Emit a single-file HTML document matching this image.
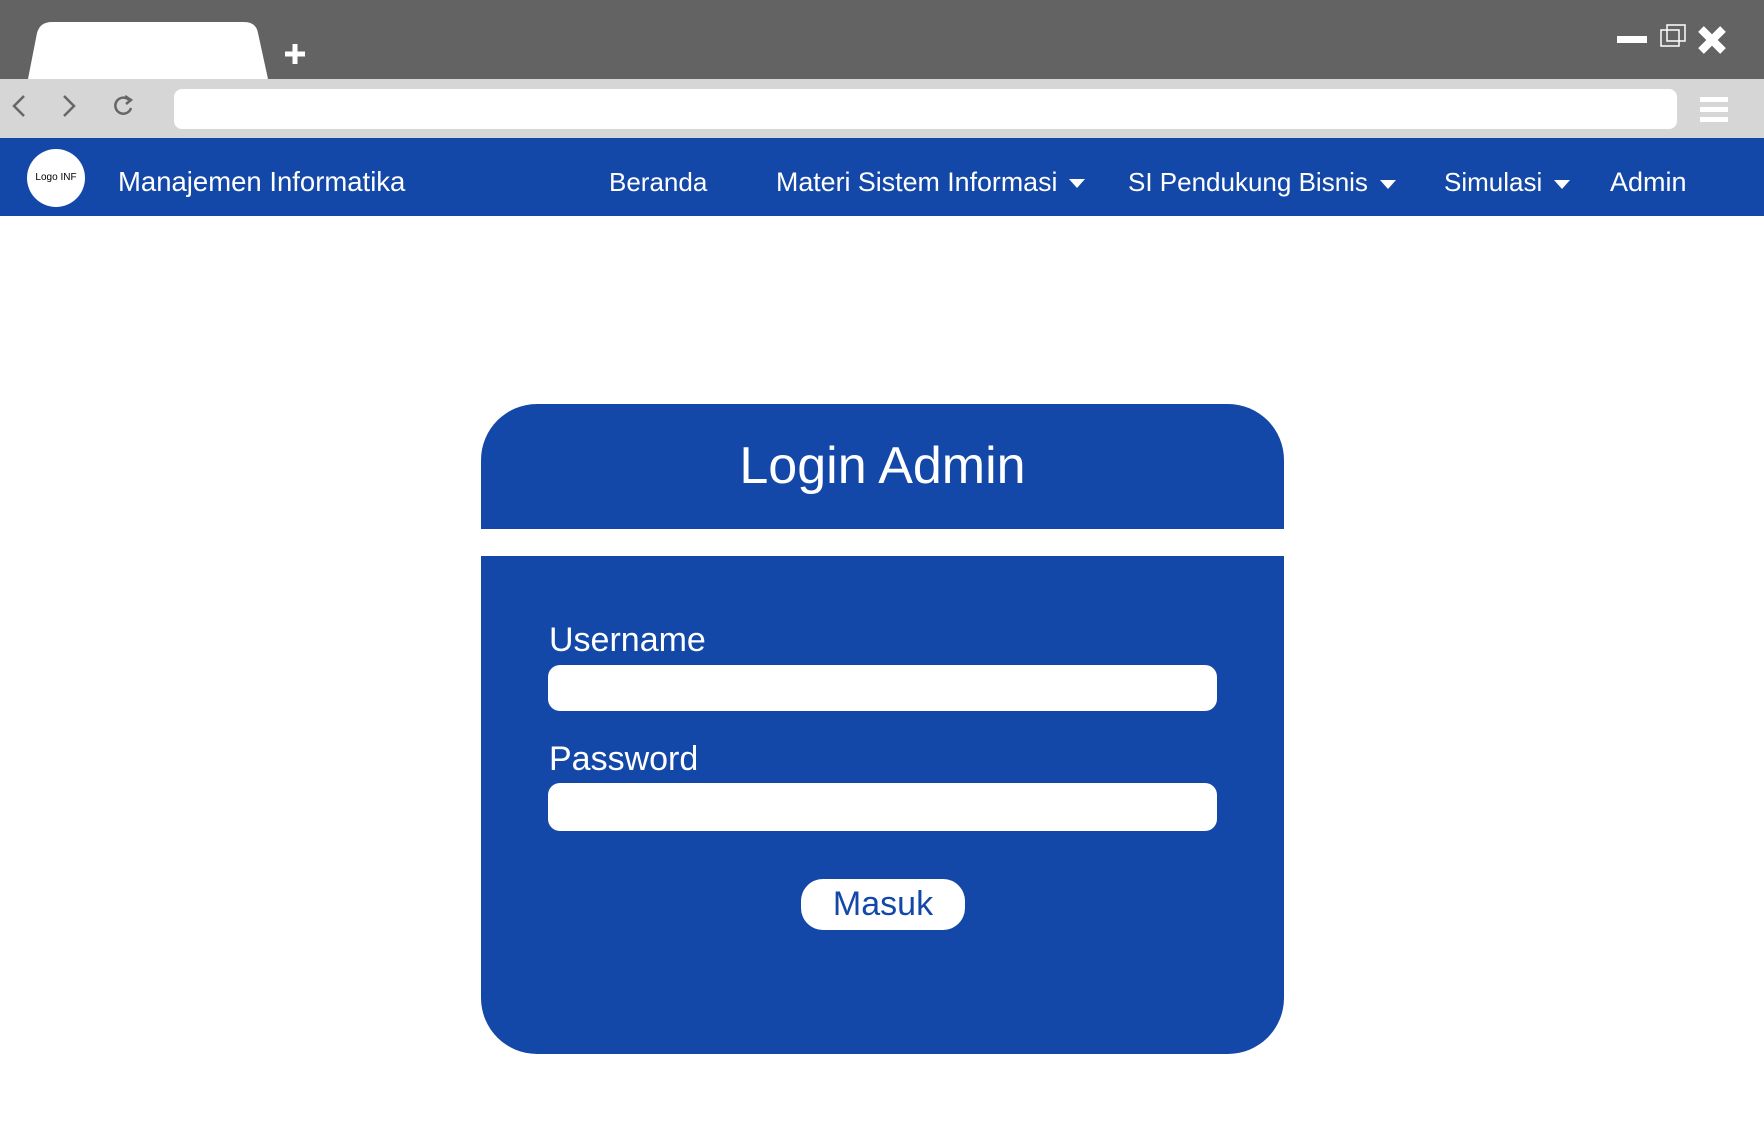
<!DOCTYPE html>
<html><head><meta charset="utf-8"><style>
*{margin:0;padding:0;box-sizing:border-box}
body{width:1764px;height:1142px;background:#fff;position:relative;overflow:hidden;font-family:"Liberation Sans",sans-serif}
.abs{position:absolute}
.nav{color:#fff;font-size:26px;top:167px;white-space:nowrap}
.tri{display:inline-block;width:0;height:0;border-left:8px solid transparent;border-right:8px solid transparent;border-top:9px solid #fff;margin-left:12px;vertical-align:middle}
.lbl{color:#fff;font-size:34px;left:549px}
.inp{background:#fff;border-radius:12px;left:548px;width:669px}
</style></head><body>
<div class="abs" style="left:0;top:0;width:1764px;height:79px;background:#636363"></div>
<svg class="abs" style="left:0;top:0" width="320" height="80"><path d="M28 79 L37 33 Q40 22 52 22 L244 22 Q256 22 258 33 L268 79 Z" fill="#fff"/><path d="M295 44v20M285 54h20" stroke="#fff" stroke-width="5"/></svg>
<svg class="abs" style="left:1600px;top:20px" width="140" height="40"><rect x="17" y="16" width="30" height="7" fill="#fff"/><rect x="61" y="10" width="18" height="16" fill="none" stroke="#fff" stroke-width="1.5"/><rect x="67" y="5" width="18" height="16" fill="none" stroke="#fff" stroke-width="1.5"/><path d="M101 9L123 31M123 9L101 31" stroke="#fff" stroke-width="8"/></svg>
<div class="abs" style="left:0;top:79px;width:1764px;height:59px;background:#d6d6d6"></div>
<div class="abs" style="left:174px;top:89px;width:1503px;height:40px;background:#fff;border-radius:8px"></div>
<svg class="abs" style="left:0;top:88px" width="150" height="40"><path d="M24 8L14 18L24 28M64 8L74 18L64 28" stroke="#666" stroke-width="2.5" fill="none"/><path d="M129 12A8 8 0 1 0 131 20" stroke="#666" stroke-width="2.5" fill="none"/><path d="M125 8L131 12L126 16" stroke="#666" stroke-width="2.5" fill="none"/></svg>
<svg class="abs" style="left:1698px;top:95px" width="32" height="30"><rect x="2" y="2" width="28" height="5" fill="#fff"/><rect x="2" y="12" width="28" height="5" fill="#fff"/><rect x="2" y="22" width="28" height="5" fill="#fff"/></svg>
<div class="abs" style="left:0;top:138px;width:1764px;height:78px;background:#1448a8"></div>
<div class="abs" style="left:27px;top:149px;width:58px;height:58px;border-radius:50%;background:#fff;color:#000;font-size:10px;text-align:center;line-height:58px">Logo INF</div>
<div class="abs nav" style="left:118px;font-size:27.5px;top:166px">Manajemen Informatika</div>
<div class="abs nav" style="left:609px">Beranda</div>
<div class="abs nav" style="left:776px;font-size:26.8px">Materi Sistem Informasi<span class="tri"></span></div>
<div class="abs nav" style="left:1128px">SI Pendukung Bisnis<span class="tri"></span></div>
<div class="abs nav" style="left:1444px">Simulasi<span class="tri"></span></div>
<div class="abs nav" style="left:1610px;font-size:27px">Admin</div>
<div class="abs" style="left:481px;top:404px;width:803px;height:650px;background:#1448a8;border-radius:56px"></div>
<div class="abs" style="left:481px;top:529px;width:803px;height:27px;background:#fff"></div>
<div class="abs" style="left:481px;top:436px;width:803px;text-align:center;color:#fff;font-size:52px;line-height:60px">Login Admin</div>
<div class="abs lbl" style="top:621px">Username</div>
<div class="abs inp" style="top:665px;height:46px"></div>
<div class="abs lbl" style="top:740px">Password</div>
<div class="abs inp" style="top:783px;height:48px"></div>
<div class="abs" style="left:801px;top:879px;width:164px;height:51px;background:#fff;border-radius:22px;color:#1448a8;font-size:34px;text-align:center;line-height:51px">Masuk</div>
</body></html>
